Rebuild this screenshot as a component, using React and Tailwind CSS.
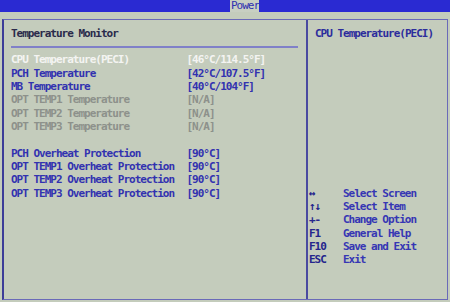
import React from "react";

const F = { fontFamily: '"DejaVu Sans Mono", "Liberation Mono", monospace' };

const rows = [
  { l: "CPU Temperature(PECI)", v: "[46°C/114.5°F]", c: "text-[#f4f4f2]" },
  { l: "PCH Temperature", v: "[42°C/107.5°F]", c: "text-[#3232b0]" },
  { l: "MB Temperature", v: "[40°C/104°F]", c: "text-[#3232b0]" },
  { l: "OPT TEMP1 Temperature", v: "[N/A]", c: "text-[#8d918b]" },
  { l: "OPT TEMP2 Temperature", v: "[N/A]", c: "text-[#8d918b]" },
  { l: "OPT TEMP3 Temperature", v: "[N/A]", c: "text-[#8d918b]" },
  null,
  { l: "PCH Overheat Protection", v: "[90°C]", c: "text-[#3232b0]" },
  { l: "OPT TEMP1 Overheat Protection", v: "[90°C]", c: "text-[#3232b0]" },
  { l: "OPT TEMP2 Overheat Protection", v: "[90°C]", c: "text-[#3232b0]" },
  { l: "OPT TEMP3 Overheat Protection", v: "[90°C]", c: "text-[#3232b0]" },
];

const help = [
  ["↔", "Select Screen"],
  ["↑↓", "Select Item"],
  ["+-", "Change Option"],
  ["F1", "General Help"],
  ["F10", "Save and Exit"],
  ["ESC", "Exit"],
];

export default function App() {
  return (
    <div
      className="w-[450px] h-[302px] bg-[#c4ccbc] overflow-hidden font-bold text-[11px] tracking-[-1px] leading-[13.33px]"
      style={F}
    >
      <div className="h-[12px] bg-[#2a2ad2] flex">
        <div className="ml-[230px] w-[29px] h-[12px] bg-[#c8cfc2] text-[#3030b0] font-normal text-[11px] leading-[12px] pl-[1px]">
          Power
        </div>
      </div>
      <div className="mt-[7px] ml-[2px] w-[446px] h-[281px] border-t border-r border-b border-l-2 border-[#6a6ab8] border-l-[#3c3c98] flex">
        <div className="w-[304px] border-r-2 border-[#4a4aa0] pl-[7px] pt-[6.67px]">
          <div className="h-[13.33px] text-[#2a2a4a]">Temperature Monitor</div>
          <div className="h-[13.33px] flex items-center">
            <div className="w-[287px] h-[2px] bg-[#8080c8]" />
          </div>
          {rows.map((r, i) =>
            r ? (
              <div key={i} className={`h-[13.33px] flex whitespace-nowrap ${r.c}`}>
                <div className="w-[175.5px]">{r.l}</div>
                <div>{r.v}</div>
              </div>
            ) : (
              <div key={i} className="h-[13.33px]" />
            )
          )}
        </div>
        <div className="flex-1 pt-[6.67px]">
          <div className="h-[13.33px] pl-[7px] text-[#2c2c9c] whitespace-nowrap">CPU Temperature(PECI)</div>
          <div className="mt-[146.67px] pl-[1px]">
            {help.map(([k, d], i) => (
              <div key={i} className="h-[13.33px] flex whitespace-nowrap">
                <div className="w-[34px] text-[#25258c]">{k}</div>
                <div className="text-[#3636b4]">{d}</div>
              </div>
            ))}
          </div>
        </div>
      </div>
    </div>
  );
}
